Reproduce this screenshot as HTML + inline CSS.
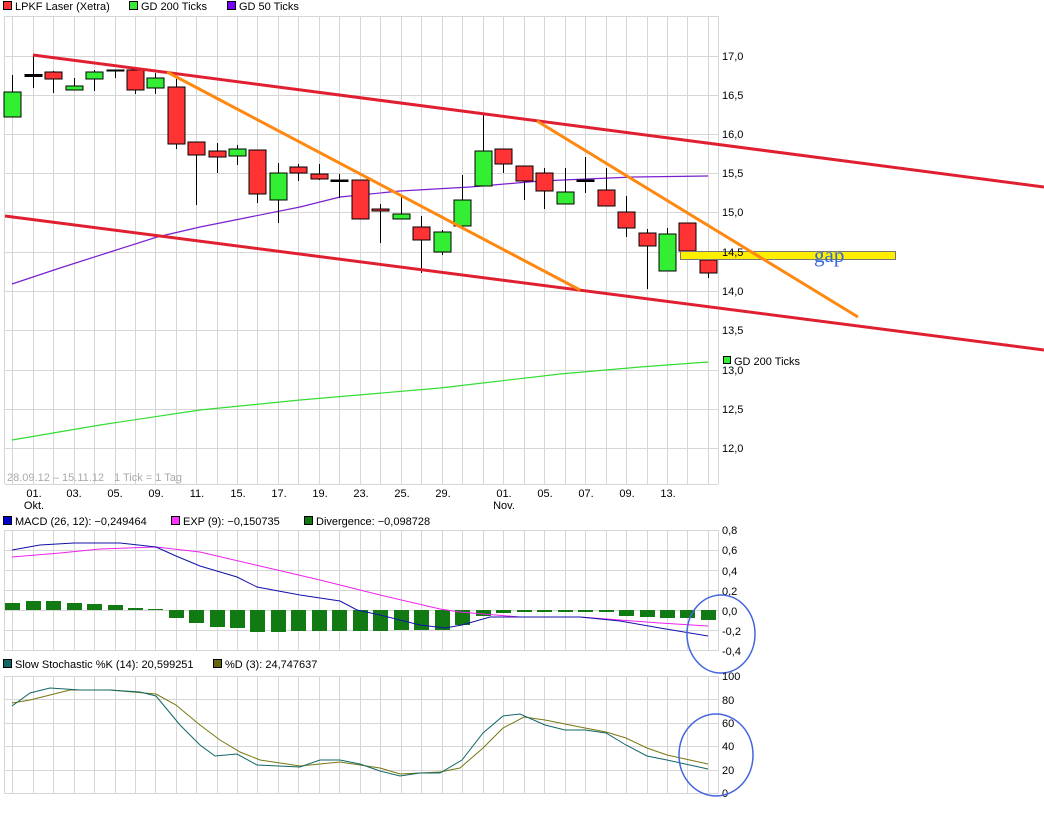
<!DOCTYPE html>
<html><head><meta charset="utf-8"><style>
html,body{margin:0;padding:0;background:#fff;}
body{width:1044px;height:824px;overflow:hidden;}
svg{display:block;font-family:"Liberation Sans",Arial,sans-serif;font-size:11px;}
</style></head><body>
<svg width="1044" height="824" viewBox="0 0 1044 824" xmlns="http://www.w3.org/2000/svg">
<rect x="3.5" y="1.5" width="8" height="8" fill="#ff3333" stroke="#000"/>
<text x="15" y="10" fill="#000">LPKF Laser (Xetra)</text>
<rect x="129.5" y="1.5" width="8" height="8" fill="#33ee33" stroke="#000"/>
<text x="141" y="10">GD 200 Ticks</text>
<rect x="227.5" y="1.5" width="8" height="8" fill="#7700ff" stroke="#000"/>
<text x="239" y="10">GD 50 Ticks</text>

<g stroke="#d6d6d6" stroke-width="1" fill="none">
<path d="M12.5 16V484M33.5 16V484M53.5 16V484M74.5 16V484M94.5 16V484M115.5 16V484M135.5 16V484M155.5 16V484M176.5 16V484M196.5 16V484M217.5 16V484M237.5 16V484M257.5 16V484M278.5 16V484M298.5 16V484M319.5 16V484M339.5 16V484M360.5 16V484M380.5 16V484M401.5 16V484M421.5 16V484M442.5 16V484M462.5 16V484M483.5 16V484M503.5 16V484M524.5 16V484M544.5 16V484M565.5 16V484M585.5 16V484M606.5 16V484M626.5 16V484M647.5 16V484M667.5 16V484M687.5 16V484M708.5 16V484"/>
<path d="M5 16.5H718M5 56.5H718M5 95.5H718M5 134.5H718M5 173.5H718M5 212.5H718M5 252.5H718M5 291.5H718M5 330.5H718M5 370.5H718M5 409.5H718M5 448.5H718M5 484.5H718"/>
<path d="M4.5 16V484M718.5 16V484"/>
<path d="M12.5 530V651M33.5 530V651M53.5 530V651M74.5 530V651M94.5 530V651M115.5 530V651M135.5 530V651M155.5 530V651M176.5 530V651M196.5 530V651M217.5 530V651M237.5 530V651M257.5 530V651M278.5 530V651M298.5 530V651M319.5 530V651M339.5 530V651M360.5 530V651M380.5 530V651M401.5 530V651M421.5 530V651M442.5 530V651M462.5 530V651M483.5 530V651M503.5 530V651M524.5 530V651M544.5 530V651M565.5 530V651M585.5 530V651M606.5 530V651M626.5 530V651M647.5 530V651M667.5 530V651M687.5 530V651M708.5 530V651"/>
<path d="M5 530.5H718M5 550.5H718M5 570.5H718M5 590.5H718M5 610.5H718M5 630.5H718M5 650.5H718M4.5 530V651M718.5 530V651"/>
<path d="M12.5 676V794M33.5 676V794M53.5 676V794M74.5 676V794M94.5 676V794M115.5 676V794M135.5 676V794M155.5 676V794M176.5 676V794M196.5 676V794M217.5 676V794M237.5 676V794M257.5 676V794M278.5 676V794M298.5 676V794M319.5 676V794M339.5 676V794M360.5 676V794M380.5 676V794M401.5 676V794M421.5 676V794M442.5 676V794M462.5 676V794M483.5 676V794M503.5 676V794M524.5 676V794M544.5 676V794M565.5 676V794M585.5 676V794M606.5 676V794M626.5 676V794M647.5 676V794M667.5 676V794M687.5 676V794M708.5 676V794"/>
<path d="M5 676.5H718M5 699.5H718M5 723.5H718M5 746.5H718M5 770.5H718M5 793.5H718M4.5 676V794M718.5 676V794"/>
</g>

<path d="M12 440 L100 425 L200 410 L300 400 L440 388 L560 374 L640 367 L708 362" stroke="#33dd33" stroke-width="1.2" fill="none"/>
<path d="M12 284 L60 268 L110 252 L157 237 L200 227 L250 217 L300 207 L340 197 L400 191 L470 187 L540 181 L633 177 L708 176" stroke="#7a1fd0" stroke-width="1.2" fill="none"/>

<g stroke="#000" stroke-width="1">
<path d="M12.5 75V117M33.5 56V88M53.5 71V93M74.5 78V90M94.5 70V91M115.5 70V78M135.5 70V94M155.5 73V94M176.5 79V149M196.5 142V205M217.5 143V173M237.5 145V165M257.5 150V203M278.5 163V223M298.5 164V181M319.5 164V180M339.5 174V198M360.5 180V219M380.5 204V243M401.5 197V219M421.5 216V273M442.5 230V255M462.5 175V226M483.5 115V186M503.5 149V173M524.5 166V200M544.5 168V209M565.5 168V204M585.5 157V193M606.5 168V206M626.5 196V237M647.5 229V289M667.5 228V271M708.5 260V278"/>
</g>
<g stroke="#000" stroke-width="1">
<rect x="4" y="92" width="17" height="25" fill="#33ee33"/>
<rect x="25" y="74.5" width="17" height="2" fill="#000"/>
<rect x="45" y="72" width="17" height="7" fill="#ff3333"/>
<rect x="66" y="86" width="17" height="4" fill="#33ee33"/>
<rect x="86" y="72" width="17" height="7" fill="#33ee33"/>
<rect x="107" y="70" width="17" height="1" fill="#000"/>
<rect x="127" y="70" width="17" height="20" fill="#ff3333"/>
<rect x="147" y="78" width="17" height="10" fill="#33ee33"/>
<rect x="168" y="87" width="17" height="57" fill="#ff3333"/>
<rect x="188" y="142" width="17" height="13" fill="#ff3333"/>
<rect x="209" y="151" width="17" height="6" fill="#ff3333"/>
<rect x="229" y="149" width="17" height="7" fill="#33ee33"/>
<rect x="249" y="150" width="17" height="44" fill="#ff3333"/>
<rect x="270" y="173" width="17" height="27" fill="#33ee33"/>
<rect x="290" y="167" width="17" height="6" fill="#ff3333"/>
<rect x="311" y="174" width="17" height="5" fill="#ff3333"/>
<rect x="331" y="180" width="17" height="1.5" fill="#000"/>
<rect x="352" y="180" width="17" height="39" fill="#ff3333"/>
<rect x="372" y="209" width="17" height="2" fill="#ff3333"/>
<rect x="393" y="214" width="17" height="5" fill="#33ee33"/>
<rect x="413" y="227" width="17" height="13" fill="#ff3333"/>
<rect x="434" y="232" width="17" height="20" fill="#33ee33"/>
<rect x="454" y="200" width="17" height="26" fill="#33ee33"/>
<rect x="475" y="151" width="17" height="35" fill="#33ee33"/>
<rect x="495" y="149" width="17" height="15" fill="#ff3333"/>
<rect x="516" y="166" width="17" height="15" fill="#ff3333"/>
<rect x="536" y="173" width="17" height="18" fill="#ff3333"/>
<rect x="557" y="192" width="17" height="12" fill="#33ee33"/>
<rect x="577" y="180" width="17" height="1.5" fill="#000"/>
<rect x="598" y="190" width="17" height="16" fill="#ff3333"/>
<rect x="618" y="212" width="17" height="16" fill="#ff3333"/>
<rect x="639" y="233" width="17" height="13" fill="#ff3333"/>
<rect x="659" y="234" width="17" height="37" fill="#33ee33"/>
<rect x="679" y="223" width="17" height="28" fill="#ff3333"/>
<rect x="700" y="260" width="17" height="13" fill="#ff3333"/>
</g>

<rect x="680.5" y="251.5" width="215" height="8" fill="#ffee00" stroke="#777" stroke-width="1"/>
<text x="814" y="262" font-family="'Liberation Serif',serif" font-size="21" fill="#3366dd">gap</text>

<path d="M33 55 L1044 187" stroke="#e02030" stroke-width="3" fill="none"/>
<path d="M5 216 L1044 350" stroke="#e02030" stroke-width="3" fill="none"/>
<path d="M167 72 L580 290" stroke="#ff8811" stroke-width="3" fill="none"/>
<path d="M537 121 L858 317" stroke="#ff8811" stroke-width="3" fill="none"/>

<rect x="723.5" y="356.5" width="7" height="7" fill="#33ee33" stroke="#000"/>
<text x="734" y="365">GD 200 Ticks</text>

<g fill="#000">
<text x="722" y="60">17,0</text><text x="722" y="99">16,5</text><text x="722" y="138">16,0</text>
<text x="722" y="177">15,5</text><text x="722" y="216">15,0</text><text x="722" y="256">14,5</text>
<text x="722" y="295">14,0</text><text x="722" y="334">13,5</text><text x="722" y="374">13,0</text>
<text x="722" y="413">12,5</text><text x="722" y="452">12,0</text>
</g>
<text x="7" y="481" fill="#aaa">28.09.12 – 15.11.12</text>
<text x="114" y="481" fill="#aaa">1 Tick = 1 Tag</text>
<g fill="#000" text-anchor="middle">
<text x="34" y="497">01.</text><text x="34" y="509">Okt.</text>
<text x="74" y="497">03.</text><text x="115" y="497">05.</text><text x="156" y="497">09.</text>
<text x="197" y="497">11.</text><text x="238" y="497">15.</text><text x="279" y="497">17.</text>
<text x="320" y="497">19.</text><text x="361" y="497">23.</text><text x="402" y="497">25.</text>
<text x="443" y="497">29.</text><text x="504" y="497">01.</text><text x="504" y="509">Nov.</text>
<text x="545" y="497">05.</text><text x="586" y="497">07.</text><text x="627" y="497">09.</text>
<text x="668" y="497">13.</text>
</g>

<rect x="3.5" y="516.5" width="8" height="8" fill="#0000cc" stroke="#000"/>
<text x="15" y="525">MACD (26, 12): −0,249464</text>
<rect x="171.5" y="516.5" width="8" height="8" fill="#ff33ff" stroke="#000"/>
<text x="183" y="525">EXP (9): −0,150735</text>
<rect x="304.5" y="516.5" width="8" height="8" fill="#117711" stroke="#000"/>
<text x="316" y="525">Divergence: −0,098728</text>

<g fill="#127a12">
<rect x="5" y="603" width="15" height="7"/><rect x="26" y="601" width="15" height="9"/>
<rect x="46" y="601" width="15" height="9"/><rect x="67" y="603" width="15" height="7"/>
<rect x="87" y="604" width="15" height="6"/><rect x="108" y="605" width="15" height="5"/>
<rect x="128" y="608" width="15" height="2"/><rect x="148" y="609" width="15" height="1"/>
<rect x="169" y="610" width="15" height="8"/><rect x="189" y="610" width="15" height="13"/>
<rect x="210" y="610" width="15" height="17"/><rect x="230" y="610" width="15" height="18"/>
<rect x="250" y="610" width="15" height="22"/><rect x="271" y="610" width="15" height="22"/>
<rect x="291" y="610" width="15" height="21"/><rect x="312" y="610" width="15" height="21"/>
<rect x="332" y="610" width="15" height="21"/><rect x="353" y="610" width="15" height="21"/>
<rect x="373" y="610" width="15" height="21"/><rect x="394" y="610" width="15" height="20"/>
<rect x="414" y="610" width="15" height="20"/><rect x="435" y="610" width="15" height="20"/>
<rect x="455" y="610" width="15" height="15"/><rect x="476" y="610" width="15" height="6"/>
<rect x="496" y="610" width="15" height="3"/><rect x="517" y="610" width="15" height="2"/>
<rect x="537" y="610" width="15" height="2"/><rect x="558" y="610" width="15" height="2"/>
<rect x="578" y="610" width="15" height="2"/><rect x="599" y="610" width="15" height="2"/>
<rect x="619" y="610" width="15" height="6"/><rect x="640" y="610" width="15" height="7"/>
<rect x="660" y="610" width="15" height="8"/><rect x="680" y="610" width="15" height="8"/>
<rect x="701" y="610" width="15" height="10"/>
</g>
<path d="M12 557 L60 553 L100 549 L156 547 L200 552 L260 566 L320 580 L380 595 L440 609 L460 612 L520 617 L580 617 L620 620 L660 623 L708 626" stroke="#ee22ee" stroke-width="1" fill="none"/>
<path d="M12 550 L40 545 L74 543 L120 543 L156 547 L176 556 L200 566 L237 577 L257 587 L300 595 L340 601 L357 610 L380 615 L420 625 L445 628 L462 625 L490 617 L520 617 L580 617 L620 621 L660 628 L708 636" stroke="#1111aa" stroke-width="1" fill="none"/>
<g fill="#000">
<text x="722" y="534">0,8</text><text x="722" y="554">0,6</text><text x="722" y="575">0,4</text>
<text x="722" y="595">0,2</text><text x="722" y="615">0,0</text><text x="722" y="635">-0,2</text>
<text x="722" y="655">-0,4</text>
</g>
<ellipse cx="721" cy="634" rx="34" ry="39" fill="none" stroke="#4466dd" stroke-width="1.5"/>

<rect x="3.5" y="659.5" width="8" height="8" fill="#116666" stroke="#000"/>
<text x="15" y="668">Slow Stochastic %K (14): 20,599251</text>
<rect x="213.5" y="659.5" width="8" height="8" fill="#666611" stroke="#000"/>
<text x="225" y="668">%D (3): 24,747637</text>

<path d="M12 703 L30 700 L50 695 L70 690 L110 690 L156 694 L176 705 L200 725 L220 740 L240 752 L260 760 L300 766 L340 762 L380 768 L400 774 L440 772 L460 768 L483 748 L503 728 L524 717 L545 720 L585 728 L606 732 L626 738 L647 748 L667 755 L708 764" stroke="#777711" stroke-width="1" fill="none"/>
<path d="M12 706 L30 693 L50 688 L80 690 L110 690 L140 692 L156 696 L180 725 L200 745 L215 756 L237 754 L257 765 L300 767 L320 760 L340 760 L360 764 L380 771 L400 776 L420 773 L440 773 L462 760 L483 733 L503 716 L520 714 L545 725 L565 730 L585 730 L606 733 L626 745 L647 756 L667 760 L708 769" stroke="#116666" stroke-width="1" fill="none"/>
<g fill="#000">
<text x="722" y="680">100</text><text x="722" y="704">80</text><text x="722" y="727">60</text>
<text x="722" y="750">40</text><text x="722" y="774">20</text><text x="722" y="797">0</text>
</g>
<ellipse cx="716" cy="755" rx="37" ry="41" fill="none" stroke="#4466dd" stroke-width="1.5"/>
</svg>
</body></html>
